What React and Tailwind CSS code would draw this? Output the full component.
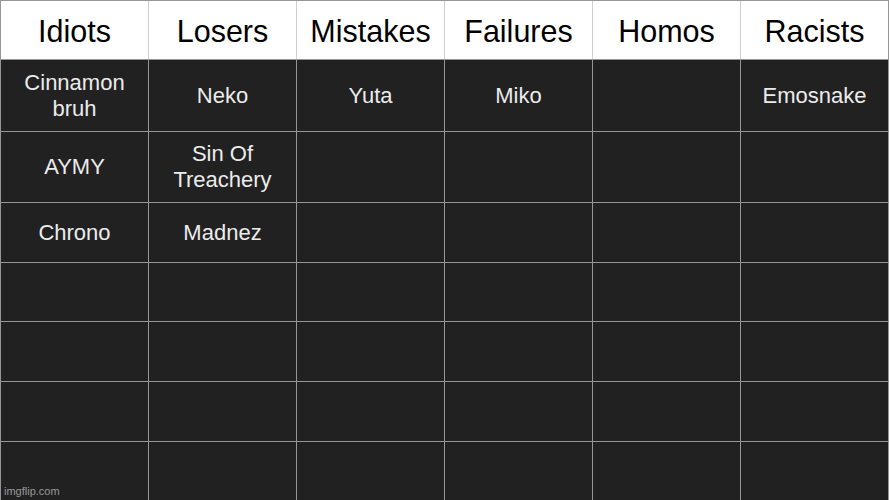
const HEADERS = ['Idiots', 'Losers', 'Mistakes', 'Failures', 'Homos', 'Racists'];

const ROWS = [
  ['Cinnamon\nbruh', 'Neko', 'Yuta', 'Miko', '', 'Emosnake'],
  ['AYMY', 'Sin Of\nTreachery', '', '', '', ''],
  ['Chrono', 'Madnez', '', '', '', ''],
  ['', '', '', '', '', ''],
  ['', '', '', '', '', ''],
  ['', '', '', '', '', ''],
  ['', '', '', '', '', ''],
];

export default function App() {
  return (
    <div className="relative w-[889px] h-[500px] overflow-hidden bg-[#969696] font-['Liberation_Sans',Arial,sans-serif]">
      <div className="grid grid-cols-[repeat(6,147px)] grid-rows-[58px_71px_70px_59px_58px_59px_59px_58px] gap-px pt-px px-px">
        {HEADERS.map((h, i) => (
          <div
            key={h}
            className={`flex items-center justify-center pt-[2px] bg-white text-black text-[30.5px] leading-none ${i < 5 ? 'shadow-[1px_0_0_#cfcfcf]' : ''}`}
          >
            {h}
          </div>
        ))}
        {ROWS.flatMap((row, r) =>
          row.map((cell, c) => (
            <div
              key={`${r}-${c}`}
              className="flex items-center justify-center bg-[#212121] text-[#ececec] text-[22px] leading-[26px] text-center whitespace-pre-line"
            >
              {cell}
            </div>
          ))
        )}
      </div>
      <span className="absolute left-[4px] bottom-[3px] text-[11px] leading-none text-[#9a9a9a]">imgflip.com</span>
    </div>
  );
}
